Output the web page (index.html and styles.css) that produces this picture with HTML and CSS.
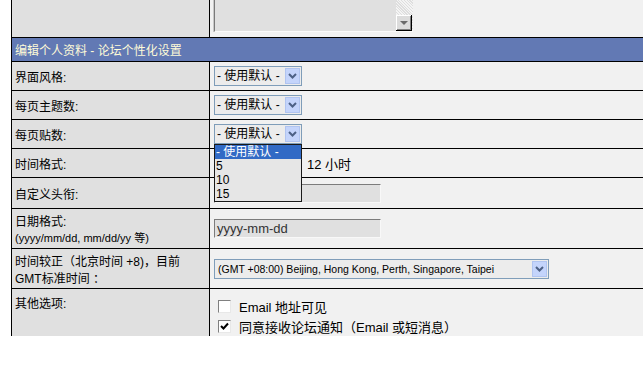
FILE: index.html
```html
<!DOCTYPE html>
<html lang="zh-CN">
<head>
    <meta charset="UTF-8">
    <title>编辑个人资料 - 论坛个性化设置</title>
    <link rel="stylesheet" href="styles.css">
</head>
<body>
  <table class="settings">
    <!-- tail of the signature row above -->
    <tr class="row-sig">
      <td class="label"></td>
      <td class="field">
        <div class="textarea">
          <div class="scrollbar"><span class="scroll-down"></span></div>
        </div>
      </td>
    </tr>

    <tr>
      <td colspan="2" class="head">编辑个人资料 - 论坛个性化设置</td>
    </tr>

    <tr class="row">
      <td class="label">界面风格:</td>
      <td class="field">
        <div class="select">
          <span class="select-text">- 使用默认 -</span>
          <span class="select-btn"><svg width="9" height="6" viewBox="0 0 9 6"><path d="M1 1 L4.5 4.5 L8 1" fill="none" stroke="#4d6185" stroke-width="2"/></svg></span>
        </div>
      </td>
    </tr>

    <tr class="row">
      <td class="label">每页主题数:</td>
      <td class="field">
        <div class="select">
          <span class="select-text">- 使用默认 -</span>
          <span class="select-btn"><svg width="9" height="6" viewBox="0 0 9 6"><path d="M1 1 L4.5 4.5 L8 1" fill="none" stroke="#4d6185" stroke-width="2"/></svg></span>
        </div>
      </td>
    </tr>

    <tr class="row">
      <td class="label">每页贴数:</td>
      <td class="field">
        <div class="select-wrap">
          <div class="select">
            <span class="select-text">- 使用默认 -</span>
            <span class="select-btn"><svg width="9" height="6" viewBox="0 0 9 6"><path d="M1 1 L4.5 4.5 L8 1" fill="none" stroke="#4d6185" stroke-width="2"/></svg></span>
          </div>
          <!-- opened dropdown list -->
          <ul class="dropdown">
            <li class="selected">- 使用默认 -</li>
            <li>5</li>
            <li>10</li>
            <li>15</li>
          </ul>
        </div>
      </td>
    </tr>

    <tr class="row">
      <td class="label">时间格式:</td>
      <td class="field">
        <div class="radio-line">
          <span class="radio"></span>
          <span class="radio-text">12 小时</span>
        </div>
      </td>
    </tr>

    <tr class="row row-input">
      <td class="label">自定义头衔:</td>
      <td class="field"><div class="textbox"></div></td>
    </tr>

    <tr class="row row-tall">
      <td class="label">日期格式:<br><span class="hint">(yyyy/mm/dd, mm/dd/yy 等)</span></td>
      <td class="field"><div class="textbox">yyyy-mm-dd</div></td>
    </tr>

    <tr class="row row-tall">
      <td class="label">时间较正（北京时间 +8)，目前<br>GMT标准时间 ：</td>
      <td class="field">
        <div class="select select-wide">
          <span class="select-text">(GMT +08:00) Beijing, Hong Kong, Perth, Singapore, Taipei</span>
          <span class="select-btn"><svg width="9" height="6" viewBox="0 0 9 6"><path d="M1 1 L4.5 4.5 L8 1" fill="none" stroke="#4d6185" stroke-width="2"/></svg></span>
        </div>
      </td>
    </tr>

    <tr class="row row-options">
      <td class="label">其他选项:</td>
      <td class="field">
        <div class="check-line"><span class="checkbox"></span>Email 地址可见</div>
        <div class="check-line"><span class="checkbox checked"><svg width="9" height="9" viewBox="0 0 9 9"><path d="M1 4 L3.5 6.5 L8 1.5" fill="none" stroke="#000" stroke-width="2"/></svg></span>同意接收论坛通知（Email 或短消息）</div>
      </td>
    </tr>
  </table>
</body>
</html>
```

FILE: styles.css
```css
body {
    margin: 0;
    background-color: #ffffff;
    font-family: "Liberation Sans", "Noto Sans CJK SC", sans-serif;
    font-size: 12px;
    color: #000000;
    overflow: hidden;
}

.settings {
    border-collapse: collapse;
    width: 720px;
    margin: -36px 0 0 11px;
}

.settings td {
    border: 1px solid #000000;
    padding: 0 3px;
    vertical-align: middle;
}

.label {
    width: 191px;
    background-color: #e0e0e0;
}

.field {
    background-color: #f1f1f1;
    padding-left: 4px !important;
}

/* signature textarea tail */
.row-sig td {
    height: 67px;
    vertical-align: bottom;
    padding-bottom: 5px;
}

.textarea {
    position: relative;
    width: 198px;
    height: 50px;
    background-color: #e0e0e0;
    border-left: 1px solid #7a7a7a;
    border-bottom: 1px solid #fafafa;
    box-shadow: -1px 0 0 #c8c8c8;
}

.scrollbar {
    position: absolute;
    right: 0;
    top: 0;
    bottom: 0;
    width: 17px;
    background-color: #e6e6e6;
    background-image: repeating-linear-gradient(45deg, #f4f4f4 0 1px, #dedede 1px 2px);
}

.scroll-down {
    position: absolute;
    left: 0;
    bottom: 0;
    width: 15px;
    height: 15px;
    background-color: #dcdcdc;
    border-right: 1px solid #000000;
    border-bottom: 1px solid #000000;
    box-shadow: inset 1px 1px 0 #ffffff, inset -1px -1px 0 #808080;
}

.scroll-down::after {
    content: "";
    position: absolute;
    left: 4px;
    top: 6px;
    border-left: 4px solid transparent;
    border-right: 4px solid transparent;
    border-top: 4px solid #6a6a6a;
}

/* section header */
.head {
    height: 23px;
    background-color: #6279b4;
    color: #fffbd8;
    padding-left: 3px !important;
}

.row td {
    height: 28px;
}

.row-input td {
    height: 30px;
}

.row-tall td {
    height: 39px;
}

.row-options td {
    height: 40px;
    vertical-align: top;
    border-bottom: none;
}

.row-options .label {
    padding-top: 5px;
}

.row-options .field {
    padding-top: 7px;
}

/* xp style select */
.select {
    display: flex;
    align-items: stretch;
    width: 86px;
    height: 18px;
    border: 1px solid #7f9db9;
    background-color: #ececec;
}

.select-text {
    flex: 1;
    padding-left: 2px;
    font-size: 12px;
    line-height: 18px;
    white-space: nowrap;
    overflow: hidden;
}

.select-btn {
    display: flex;
    align-items: center;
    justify-content: center;
    width: 15px;
    margin: 1px;
    background-color: #c4d4fb;
    border: 1px solid #b0c4f0;
    box-sizing: border-box;
}

.select-wide {
    width: 333px;
}

.select-wide .select-text {
    font-size: 10.5px;
    padding-left: 3px;
}

.select-wrap {
    position: relative;
    width: 88px;
}

.dropdown {
    position: absolute;
    left: 0;
    top: 20px;
    z-index: 2;
    width: 86px;
    margin: 0;
    padding: 0;
    list-style: none;
    border: 1px solid #1a1a1a;
    background-color: #e6e6e6;
}

.dropdown li {
    height: 14px;
    line-height: 14px;
    padding-left: 1px;
    font-size: 12px;
}

.dropdown .selected {
    background-color: #316ac5;
    color: #ffffff;
}

.radio-line {
    display: flex;
    align-items: center;
}

.radio {
    width: 11px;
    height: 11px;
    margin: 0 76px 0 4px;
    border: 1px solid #808080;
    border-radius: 50%;
    background-color: #ffffff;
}

.radio-text {
    font-size: 13px;
}

/* inset text boxes */
.textbox {
    width: 163px;
    height: 17px;
    line-height: 17px;
    padding-left: 2px;
    font-size: 13px;
    color: #333333;
    background-color: #e0e0e0;
    border-top: 1px solid #7c7c7c;
    border-left: 1px solid #7c7c7c;
    border-right: 1px solid #f8f8f8;
    border-bottom: 1px solid #f8f8f8;
}

.hint {
    font-size: 11px;
}

.check-line {
    display: flex;
    align-items: center;
    height: 20px;
    font-size: 13px;
}

.checkbox {
    display: inline-flex;
    align-items: center;
    justify-content: center;
    width: 11px;
    height: 11px;
    margin: 0 8px 0 4px;
    background-color: #ffffff;
    border-top: 1px solid #808080;
    border-left: 1px solid #808080;
    border-right: 1px solid #e8e8e8;
    border-bottom: 1px solid #e8e8e8;
}
```
